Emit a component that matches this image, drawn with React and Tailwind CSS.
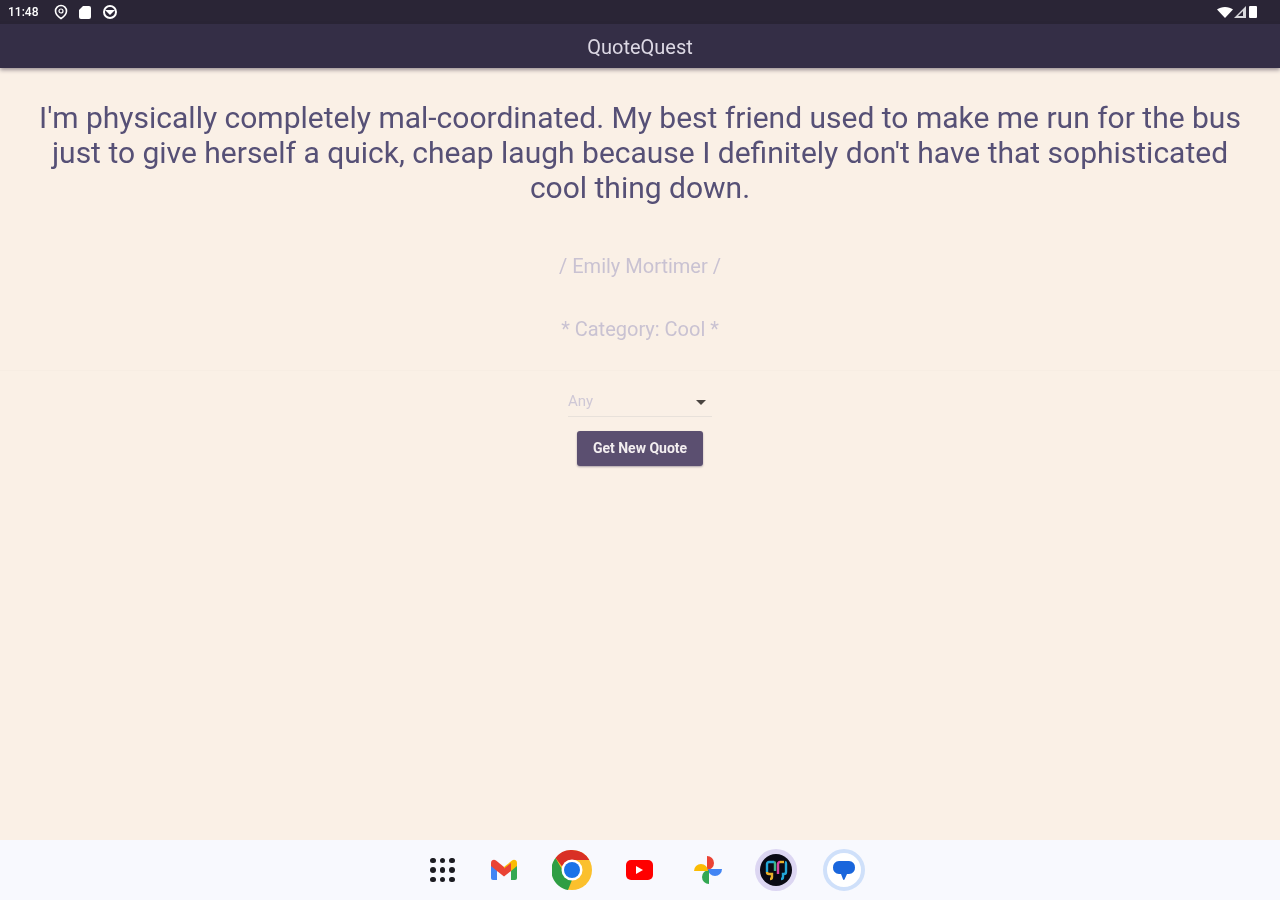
import React from "react";

const Dot = () => <span className="w-[5.500px] h-[5.500px] rounded-full bg-[#1c1c22]" />;

function Gmail() {
  return (
    <svg width="28" height="22" viewBox="0 0 28 22">
      <path d="M1 6v13a2 2 0 0 0 2 2h4V10z" fill="#4285f4" />
      <path d="M27 6v13a2 2 0 0 1-2 2h-4V10z" fill="#34a853" />
      <path d="M7 12 1 7V4c0-3 3-4 5-2.500l8 6.500v5.500z" fill="#ea4335" />
      <path d="M21 12l6-5V4c0-3-3-4-5-2.500L14 8v5.500z" fill="#fbbc04" />
      <path d="M7 4l7 5.500L21 4v8l-7 5.500L7 12z" fill="#ea4335" />
    </svg>
  );
}

function Chrome() {
  return (
    <svg width="40" height="40" viewBox="0 0 40 40">
      <circle cx="20" cy="20" r="20" fill="#fbc02d" />
      <path d="M20 0a20 20 0 0 1 17.300 10H20a10 10 0 0 0-9.500 7L3.500 8A20 20 0 0 1 20 0z" fill="#d93025" />
      <path d="M3.500 8l8.700 15A10 10 0 0 0 20 30l-4 10A20 20 0 0 1 3.500 8z" fill="#2f9e44" />
      <circle cx="20" cy="20" r="10.500" fill="#fff" />
      <circle cx="20" cy="20" r="8" fill="#1a73e8" />
    </svg>
  );
}

function Pinwheel() {
  return (
    <svg width="30" height="30" viewBox="0 0 30 30">
      <path d="M14 15V1a7 7 0 0 1 0 14z" fill="#ea4335" />
      <path d="M15 14H29a7 7 0 0 1-14 0z" fill="#4285f4" />
      <path d="M16 15v14a7 7 0 0 1 0-14z" fill="#34a853" />
      <path d="M15 16H1a7 7 0 0 1 14 0z" fill="#fbbc04" />
    </svg>
  );
}

function QuoteApp() {
  return (
    <span className="w-[42px] h-[42px] rounded-full bg-[#dcd6f2] flex items-center justify-center">
      <span className="w-[32px] h-[32px] rounded-full bg-[#0a0a14] flex items-center justify-center">
        <svg width="26" height="24" viewBox="0 0 26 24" fill="none" strokeWidth="2.400">
          <path d="M4 14V6a2 2 0 0 1 2-2h5" stroke="#22a7d8" />
          <path d="M11 4a1.500 1.500 0 0 1 1 1.500V13" stroke="#3fb58a" />
          <path d="M4 14a2 2 0 0 0 2 2h3v3a2 2 0 0 1-2 2" stroke="#e8b02a" />
          <path d="M15 16V6a2 2 0 0 1 2-2" stroke="#d946a0" />
          <path d="M17 4h4" stroke="#e8b02a" />
          <path d="M22 4a1.500 1.500 0 0 1 1 1.500V14a2 2 0 0 1-2 2h-1v3a2 2 0 0 1-2 2" stroke="#22a7d8" />
        </svg>
      </span>
    </span>
  );
}

function Messages() {
  return (
    <span className="w-[42px] h-[42px] rounded-full bg-white border-[4px] border-[#cfe0fa] flex items-center justify-center">
      <svg width="24" height="21" viewBox="0 0 24 21">
        <path d="M7 1h10a6 6 0 0 1 6 6.500 6 6 0 0 1-6 6.500h-2l-2.500 5.500a.8.8 0 0 1-1.400 0L9 14H7a6 6 0 0 1-6-6.500A6 6 0 0 1 7 1z" fill="#1a66dc" />
      </svg>
    </span>
  );
}

export default function App() {
  return (
    <div className="w-[1280px] h-[900px] flex flex-col overflow-hidden bg-[#faf0e6] font-['Roboto',sans-serif]">
      <div className="h-6 shrink-0 bg-[#2a2536] flex items-center justify-between pl-2 pr-[23px] text-white">
        <div className="flex items-center">
          <span className="text-[12px] font-medium w-[46px] blur-[0.6px]">11:48</span>
          <svg className="w-[14px] h-[16px]" viewBox="0 0 14 16" fill="none">
            <path d="M7 1.500a5.500 5.500 0 0 1 5.500 5.500c0 3-3 6-5.500 7.500C4.500 13 1.500 10 1.500 7A5.500 5.500 0 0 1 7 1.500z" stroke="#fff" strokeWidth="1.600" />
            <circle cx="7" cy="7" r="2" stroke="#fff" strokeWidth="1.200" />
          </svg>
          <svg className="ml-[10px] w-[14px] h-[16px]" viewBox="0 0 14 16">
            <path d="M5 2h6a2 2 0 0 1 2 2v9a2 2 0 0 1-2 2H3a2 2 0 0 1-2-2V6z" fill="#fff" />
          </svg>
          <svg className="ml-[10px] w-[16px] h-[16px]" viewBox="0 0 16 16" fill="none">
            <circle cx="8" cy="8" r="6" stroke="#fff" strokeWidth="2" />
            <path d="M3 6h10L8 11z" fill="#fff" />
          </svg>
        </div>
        <div className="flex items-center">
          <svg width="16" height="12" viewBox="0 0 16 12">
            <path d="M0 3.500C4 0 12 0 16 3.500L8 12z" fill="#fff" />
          </svg>
          <svg width="12" height="12" viewBox="0 0 12 12" className="ml-px">
            <path d="M12 0v12H0z" fill="#d8d8dc" />
            <path d="M9 5v5H4z" fill="#2a2536" />
          </svg>
          <span className="ml-[3px] w-2 h-3 bg-white rounded-[1px]" />
        </div>
      </div>

      <header className="h-11 shrink-0 bg-[#342e46] pt-[1px] shadow-[0_2px_4px_rgba(40,30,50,0.45)] flex items-center justify-center relative z-10">
        <h1 className="text-[20px] text-[#dcd8e4] blur-[0.5px]">QuoteQuest</h1>
      </header>

      <main className="flex-1 flex flex-col items-center">
        <p className="mt-8 px-[30px] text-center text-[30px] leading-[35px] text-[#565076] blur-[0.5px]">
          I'm physically completely mal-coordinated. My best friend used to make me run for the bus just to give herself a quick, cheap laugh because I definitely don't have that sophisticated cool thing down.
        </p>
        <p className="mt-[49px] text-[20px] leading-[24px] text-[#c9c2d2] blur-[0.5px]">/ Emily Mortimer /</p>
        <p className="mt-[39px] text-[20px] leading-[24px] text-[#c9c2d2] blur-[0.5px]">* Category: Cool *</p>
        <div className="mt-[29px] w-full h-px bg-[#f7ede3]" />
        <div className="mt-[17px] w-[144px] h-[29px] border-b border-[#e8e1da] flex items-center justify-between pr-[6px]">
          <span className="text-[15px] text-[#cfc8d6] blur-[0.5px] -translate-y-[1px]">Any</span>
          <span className="w-0 h-0 border-x-[5px] border-x-transparent border-t-[5px] border-t-[#4a4440]" />
        </div>
        <button className="mt-[14px] w-[126px] h-[35px] rounded-[3px] bg-[#5b4f70] shadow-[0_1px_2px_rgba(60,50,80,0.4)] text-[14px] font-bold text-[#f3eef0]">
          <span className="block blur-[0.4px]">Get New Quote</span>
        </button>
      </main>

      <footer className="h-[60px] shrink-0 bg-[#f8f9fe] flex items-center justify-center pr-[1px]">
        <div className="flex items-center justify-center w-[68px] pl-[14px]">
          <div className="grid grid-cols-3 gap-[4px]">
            {Array.from({ length: 9 }).map((_, i) => <Dot key={i} />)}
          </div>
        </div>
        <div className="flex items-center justify-center w-[68px]"><Gmail /></div>
        <div className="flex items-center justify-center w-[68px]"><Chrome /></div>
        <div className="flex items-center justify-center w-[68px]">
          <span className="w-[27px] h-[20px] rounded-[5px] bg-[#f00] flex items-center justify-center">
            <span className="w-0 h-0 border-y-[4.500px] border-y-transparent border-l-[7px] border-l-white" />
          </span>
        </div>
        <div className="flex items-center justify-center w-[68px]"><Pinwheel /></div>
        <div className="flex items-center justify-center w-[68px]"><QuoteApp /></div>
        <div className="flex items-center justify-center w-[68px]"><Messages /></div>
      </footer>
    </div>
  );
}
